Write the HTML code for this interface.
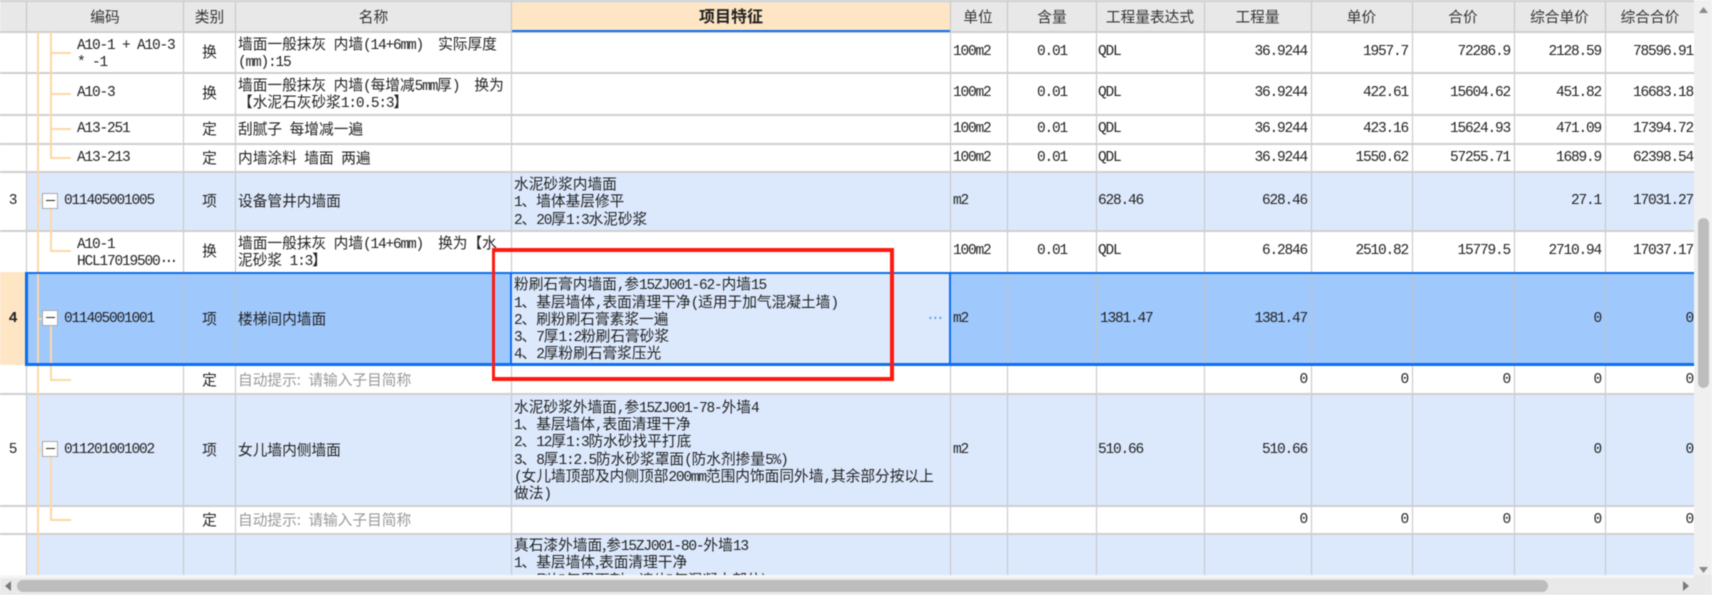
<!DOCTYPE html>
<html lang="zh"><head><meta charset="utf-8"><title>清单</title>
<style>
html,body{margin:0;padding:0;background:#fff;overflow:hidden}
#w{position:relative;width:1712px;height:595px;overflow:hidden;background:#fff;font:14.7px/17.3px "WenQuanYi Zen Hei","Noto Sans CJK SC",sans-serif;color:#222;filter:blur(.4px)}
i{font:normal 14.5px/0 "Liberation Mono",monospace;letter-spacing:-1.2px}
.b{position:absolute}
.r{position:absolute;left:0;width:1694px;overflow:hidden}
.w{background:#fff}.l{background:#dce9fd}
.c{position:absolute;top:0;bottom:0;display:flex;align-items:center;white-space:pre}
.n{left:0;width:25px;justify-content:center}
.a{left:77px}.a1{left:64px}
.k{left:184px;width:51px;justify-content:center}
.m{left:238px}.f{left:514px}.u{left:953px}
.q{left:1008px;width:88px;justify-content:center}
.e{left:1098px}
.r1,.r2,.r3,.r4,.r5{justify-content:flex-end}
.r1{left:1204px;width:103px}.r2{left:1311px;width:97px}.r3{left:1412px;width:98px}.r4{left:1514px;width:87px}.r5{left:1605px;width:88px}
.g{color:#999}
.h{position:absolute;top:3px;height:28px;display:flex;align-items:center;justify-content:center;color:#333}
.v{position:absolute;top:2px;height:573px;width:1px;background:#c4c4c4;z-index:3}
.hl{position:absolute;left:0;width:1694px;height:2px;background:#cfcfcf;z-index:3}
.t{position:absolute;background:#fdd8a6;z-index:4}
.x{position:absolute;left:42px;width:14px;height:14px;border:1px solid #a9a9a9;background:#fff;z-index:5}
.x:after{content:"";position:absolute;left:3px;top:6px;width:9px;height:1px;background:#222}
.rl{position:absolute;background:#ff1a10;z-index:9}
.d{letter-spacing:-3.7px}
</style></head><body><div id="w">

<!-- header -->
<div class="b" style="left:0;top:0;width:1694px;height:2px;background:#cfcfcf"></div>
<div class="b" style="left:0;top:2px;width:1694px;height:30px;background:#e8e8e8"></div>
<div class="b" style="left:512px;top:3px;width:438px;height:27px;background:#fee6c5"></div>
<div class="b" style="left:512px;top:30px;width:438px;height:2px;background:#0d6ef0;z-index:6"></div>
<div class="h" style="left:27px;width:156px">编码</div>
<div class="h" style="left:184px;width:51px">类别</div>
<div class="h" style="left:236px;width:275px">名称</div>
<div class="h" style="left:512px;width:438px;font-weight:bold;font-size:16px;top:2px;color:#222">项目特征</div>
<div class="h" style="left:950px;width:56px">单位</div>
<div class="h" style="left:1008px;width:88px">含量</div>
<div class="h" style="left:1097px;width:106px">工程量表达式</div>
<div class="h" style="left:1205px;width:105px">工程量</div>
<div class="h" style="left:1312px;width:99px">单价</div>
<div class="h" style="left:1413px;width:100px">合价</div>
<div class="h" style="left:1515px;width:89px">综合单价</div>
<div class="h" style="left:1606px;width:88px">综合合价</div>

<!-- rows -->
<div class="r w" style="top:32px;height:40px">
<div class="c a"><div><i>A10-1 + A10-3<br>* -1</i></div></div><div class="c k">换</div>
<div class="c m"><div>墙面一般抹灰<i> </i>内墙<i>(14+6mm)  </i>实际厚度<br><i>(mm):15</i></div></div>
<div class="c u"><i>100m2</i></div><div class="c q"><i>0.01</i></div><div class="c e"><i>QDL</i></div>
<div class="c r1"><i>36.9244</i></div><div class="c r2"><i>1957.7</i></div><div class="c r3"><i>72286.9</i></div><div class="c r4"><i>2128.59</i></div><div class="c r5"><i>78596.91</i></div></div>

<div class="r w" style="top:72px;height:42px">
<div class="c a"><i>A10-3</i></div><div class="c k">换</div>
<div class="c m"><div>墙面一般抹灰<i> </i>内墙<i>(</i>每增减<i>5mm</i>厚<i>)  </i>换为<br>【水泥石灰砂浆<i>1:0.5:3</i>】</div></div>
<div class="c u"><i>100m2</i></div><div class="c q"><i>0.01</i></div><div class="c e"><i>QDL</i></div>
<div class="c r1"><i>36.9244</i></div><div class="c r2"><i>422.61</i></div><div class="c r3"><i>15604.62</i></div><div class="c r4"><i>451.82</i></div><div class="c r5"><i>16683.18</i></div></div>

<div class="r w" style="top:114px;height:29px">
<div class="c a"><i>A13-251</i></div><div class="c k">定</div>
<div class="c m"><div>刮腻子<i> </i>每增减一遍</div></div>
<div class="c u"><i>100m2</i></div><div class="c q"><i>0.01</i></div><div class="c e"><i>QDL</i></div>
<div class="c r1"><i>36.9244</i></div><div class="c r2"><i>423.16</i></div><div class="c r3"><i>15624.93</i></div><div class="c r4"><i>471.09</i></div><div class="c r5"><i>17394.72</i></div></div>

<div class="r w" style="top:143px;height:29px">
<div class="c a"><i>A13-213</i></div><div class="c k">定</div>
<div class="c m"><div>内墙涂料<i> </i>墙面<i> </i>两遍</div></div>
<div class="c u"><i>100m2</i></div><div class="c q"><i>0.01</i></div><div class="c e"><i>QDL</i></div>
<div class="c r1"><i>36.9244</i></div><div class="c r2"><i>1550.62</i></div><div class="c r3"><i>57255.71</i></div><div class="c r4"><i>1689.9</i></div><div class="c r5"><i>62398.54</i></div></div>

<div class="r l" style="top:172px;height:58px">
<div class="b w" style="left:0;top:0;width:26px;height:58px"></div>
<div class="c n"><i>3</i></div><div class="c a1"><i>011405001005</i></div><div class="c k">项</div>
<div class="c m">设备管井内墙面</div>
<div class="c f"><div>水泥砂浆内墙面<br><i>1</i>、墙体基层修平<br><i>2</i>、<i>20</i>厚<i>1:3</i>水泥砂浆</div></div>
<div class="c u"><i>m2</i></div><div class="c e"><i>628.46</i></div>
<div class="c r1"><i>628.46</i></div><div class="c r4"><i>27.1</i></div><div class="c r5"><i>17031.27</i></div></div>

<div class="r w" style="top:230px;height:42px">
<div class="c a"><div><i>A10-1<br>HCL17019500</i><i class="d">···</i></div></div><div class="c k">换</div>
<div class="c m"><div>墙面一般抹灰<i> </i>内墙<i>(14+6mm)  </i>换为【水<br>泥砂浆<i> 1:3</i>】</div></div>
<div class="c u"><i>100m2</i></div><div class="c q"><i>0.01</i></div><div class="c e"><i>QDL</i></div>
<div class="c r1"><i>6.2846</i></div><div class="c r2"><i>2510.82</i></div><div class="c r3"><i>15779.5</i></div><div class="c r4"><i>2710.94</i></div><div class="c r5"><i>17037.17</i></div></div>

<div class="r" style="top:272px;height:93px;background:#9fc8fc">
<div class="b" style="left:0;top:0;width:25px;height:93px;background:#fee6c5"></div>
<div class="b l" style="left:512px;top:0;width:438px;height:93px"></div>
<div class="c n"><i style="font-weight:bold;font-size:15px">4</i></div><div class="c a1"><i>011405001001</i></div><div class="c k">项</div>
<div class="c m">楼梯间内墙面</div>
<div class="c f"><div>粉刷石膏内墙面<i>,</i>参<i>15ZJ001-62-</i>内墙<i>15</i><br><i>1</i>、基层墙体<i>,</i>表面清理干净<i>(</i>适用于加气混凝土墙<i>)</i><br><i>2</i>、刷粉刷石膏素浆一遍<br><i>3</i>、<i>7</i>厚<i>1:2</i>粉刷石膏砂浆<br><i>4</i>、<i>2</i>厚粉刷石膏浆压光</div></div>
<div class="c" style="left:926px;color:#4f9be6"><i class="d">···</i></div>
<div class="c u"><i>m2</i></div><div class="c e" style="left:1100px"><i>1381.47</i></div>
<div class="c r1"><i>1381.47</i></div><div class="c r4"><i>0</i></div><div class="c r5"><i>0</i></div></div>

<div class="r w" style="top:365px;height:29px">
<div class="c k">定</div><div class="c m g">自动提示:<i> </i>请输入子目简称</div>
<div class="c r1"><i>0</i></div><div class="c r2"><i>0</i></div><div class="c r3"><i>0</i></div><div class="c r4"><i>0</i></div><div class="c r5"><i>0</i></div></div>

<div class="r l" style="top:394px;height:111px">
<div class="b w" style="left:0;top:0;width:26px;height:111px"></div>
<div class="c n"><i>5</i></div><div class="c a1"><i>011201001002</i></div><div class="c k">项</div>
<div class="c m">女儿墙内侧墙面</div>
<div class="c f"><div>水泥砂浆外墙面<i>,</i>参<i>15ZJ001-78-</i>外墙<i>4</i><br><i>1</i>、基层墙体<i>,</i>表面清理干净<br><i>2</i>、<i>12</i>厚<i>1:3</i>防水砂找平打底<br><i>3</i>、<i>8</i>厚<i>1:2.5</i>防水砂浆罩面<i>(</i>防水剂掺量<i>5%)</i><br><i>(</i>女儿墙顶部及内侧顶部<i>200mm</i>范围内饰面同外墙<i>,</i>其余部分按以上<br>做法<i>)</i></div></div>
<div class="c u"><i>m2</i></div><div class="c e"><i>510.66</i></div>
<div class="c r1"><i>510.66</i></div><div class="c r4"><i>0</i></div><div class="c r5"><i>0</i></div></div>

<div class="r w" style="top:505px;height:29px">
<div class="c k">定</div><div class="c m g">自动提示:<i> </i>请输入子目简称</div>
<div class="c r1"><i>0</i></div><div class="c r2"><i>0</i></div><div class="c r3"><i>0</i></div><div class="c r4"><i>0</i></div><div class="c r5"><i>0</i></div></div>

<div class="r l" style="top:534px;height:41px">
<div class="b w" style="left:0;top:0;width:26px;height:41px"></div>
<div class="c f" style="align-items:flex-start;top:2px;bottom:auto"><div>真石漆外墙面,参<i>15ZJ001-80-</i>外墙<i>13</i><br><i>1</i>、基层墙体,表面清理干净<br><i>2</i>、刷加气界面剂一遍(加气混凝土部位)</div></div></div>

<!-- grid lines -->
<div class="v" style="left:26px"></div><div class="v" style="left:183px"></div><div class="v" style="left:235px"></div>
<div class="v" style="left:511px"></div><div class="v" style="left:950px"></div><div class="v" style="left:1007px"></div>
<div class="v" style="left:1096px"></div><div class="v" style="left:1204px"></div><div class="v" style="left:1311px"></div>
<div class="v" style="left:1412px"></div><div class="v" style="left:1514px"></div><div class="v" style="left:1605px"></div>
<div class="hl" style="top:31px"></div><div class="hl" style="top:72px"></div><div class="hl" style="top:114px"></div>
<div class="hl" style="top:143px"></div><div class="hl" style="top:171px"></div><div class="hl" style="top:230px"></div>
<div class="hl" style="top:393px"></div><div class="hl" style="top:505px"></div><div class="hl" style="top:533px"></div>

<!-- tree lines -->
<div class="t" style="left:37px;top:32px;width:2px;height:543px"></div>
<div class="t" style="left:50px;top:32px;width:2px;height:125px"></div>
<div class="t" style="left:50px;top:52px;width:21px;height:2px"></div>
<div class="t" style="left:50px;top:93px;width:21px;height:2px"></div>
<div class="t" style="left:50px;top:128px;width:21px;height:2px"></div>
<div class="t" style="left:50px;top:157px;width:21px;height:2px"></div>
<div class="t" style="left:37px;top:201px;width:6px;height:2px"></div>
<div class="t" style="left:50px;top:208px;width:2px;height:42px"></div>
<div class="t" style="left:50px;top:250px;width:21px;height:2px"></div>
<div class="t" style="left:37px;top:318px;width:6px;height:2px"></div>
<div class="t" style="left:50px;top:326px;width:2px;height:53px"></div>
<div class="t" style="left:50px;top:379px;width:21px;height:2px"></div>
<div class="t" style="left:37px;top:449px;width:6px;height:2px"></div>
<div class="t" style="left:50px;top:457px;width:2px;height:62px"></div>
<div class="t" style="left:50px;top:519px;width:21px;height:2px"></div>
<div class="x" style="top:193px"></div><div class="x" style="top:310px"></div><div class="x" style="top:441px"></div>

<!-- selection -->
<div class="b" style="left:25px;top:272px;width:1669px;height:2px;background:#0d6ef0;z-index:6"></div>
<div class="b" style="left:25px;top:363px;width:1669px;height:3px;background:#0d6ef0;z-index:6"></div>
<div class="b" style="left:25px;top:272px;width:3px;height:94px;background:#0d6ef0;z-index:6"></div>
<div class="b" style="left:510px;top:272px;width:2px;height:94px;background:#0d6ef0;z-index:6"></div>
<div class="b" style="left:949px;top:272px;width:2px;height:94px;background:#0d6ef0;z-index:6"></div>

<!-- red annotation -->
<div class="rl" style="left:492px;top:248px;width:402px;height:4px"></div>
<div class="rl" style="left:492px;top:377px;width:402px;height:4px"></div>
<div class="rl" style="left:492px;top:248px;width:3px;height:133px"></div>
<div class="rl" style="left:890px;top:248px;width:4px;height:133px"></div>

<!-- scrollbars -->
<div class="b" style="left:0;top:575px;width:1712px;height:20px;background:#e9e9e9"></div>
<div class="b" style="left:0;top:575px;width:1694px;height:3px;background:#f6f6f6"></div>
<div class="b" style="left:1694px;top:0;width:18px;height:575px;background:#f0f0f0"></div>
<div class="b" style="left:17px;top:580px;width:1531px;height:12px;background:#bdbdbd;border-radius:6px"></div>
<div class="b" style="left:1698px;top:218px;width:11px;height:170px;background:#bdbdbd;border-radius:6px"></div>
<svg class="b" style="left:0;top:0;z-index:10" width="1712" height="595"><path d="M1699 13L1708 13L1703.500 7Z" fill="#8a8a8a"/><path d="M1699 567L1708 567L1703.500 573Z" fill="#8a8a8a"/><path d="M11 581L11 591L5 586Z" fill="#7a7a7a"/><path d="M1683 581L1683 591L1689 586Z" fill="#7a7a7a"/></svg>
</div></body></html>
